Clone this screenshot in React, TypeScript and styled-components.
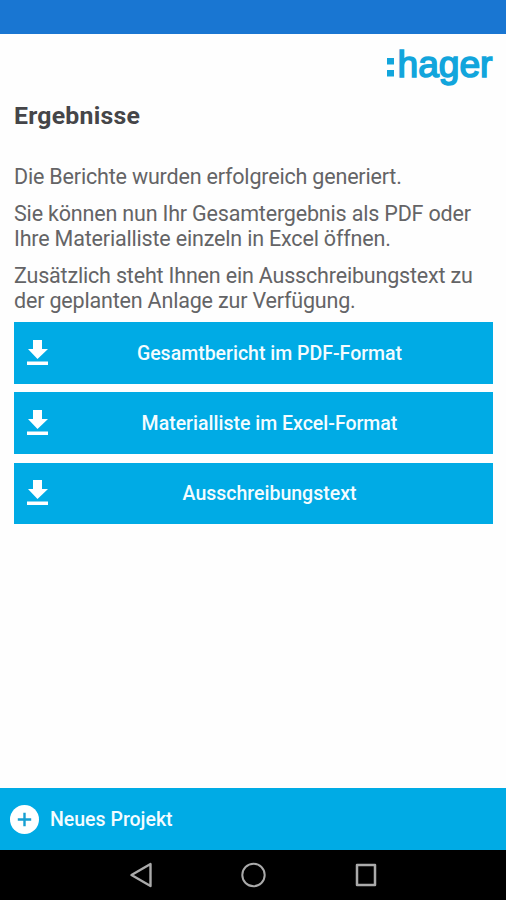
import React from 'react';
import styled, { createGlobalStyle } from 'styled-components';

const GlobalStyle = createGlobalStyle`
  * { box-sizing: border-box; }
  body { margin: 0; background: #fff; }
`;

const Screen = styled.div`
  display: flex;
  flex-direction: column;
  width: 506px;
  height: 900px;
  overflow: hidden;
  background: #fefefe;
  color: #646466;
  font-family: Roboto, sans-serif;
`;

const StatusBar = styled.div`
  flex: 0 0 34px;
  background: #1976d2;
`;

const Header = styled.header`
  display: flex;
  justify-content: flex-end;
  flex: 0 0 56px;
  padding: 8px 12px 0 0;
`;

const Content = styled.main`
  flex: 1;
  padding: 11px 13px 0 14px;
`;

const Title = styled.h1`
  margin: 0 0 33px;
  font-size: 24.8px;
  line-height: 30px;
  font-weight: 700;
  letter-spacing: 0.25px;
  color: #454548;
`;

const Paragraph = styled.p`
  margin: 0 0 12px;
  font-size: 21.5px;
  line-height: 25px;
  letter-spacing: -0.18px;
  white-space: nowrap;
`;

const Actions = styled.div`
  display: flex;
  flex-direction: column;
  gap: 8.5px;
  margin-top: -3px;
`;

const BaseButton = styled.button`
  display: flex;
  align-items: center;
  border: 0;
  background: #00abe5;
  color: #f4fcff;
  font: 500 19.5px/28px Roboto, sans-serif;
`;

const ReportButton = styled(BaseButton)`
  height: 61.8px;
  padding: 0 48px 0 13px;
`;

const ReportLabel = styled.span`
  flex: 1;
  padding: 2px 0 0 45px;
  text-align: center;
  white-space: nowrap;
`;

const ProjectLabel = styled.span`
  padding-top: 2px;
`;

const NewProject = styled(BaseButton)`
  flex: 0 0 62px;
  gap: 11px;
  padding: 0 10px;
`;

const NavigationBar = styled.nav`
  display: flex;
  flex: 0 0 50px;
  justify-content: center;
  align-items: center;
  gap: 87.5px;
  background: #000;
`;

const Icon = styled.svg`
  display: block;
  flex: none;
`;

const HagerLogo = () => (
  <Icon width="108" height="46" viewBox="0 0 108 46" fill="#12a5dc" aria-label="hager">
    <rect x="1" y="16" width="7" height="6.5" />
    <rect x="1" y="28" width="7" height="6.5" />
    <text x="11.5" y="34.7" fontFamily="Liberation Sans, sans-serif" fontSize="37.5" stroke="#12a5dc" strokeWidth="1.6" textLength="95" lengthAdjust="spacingAndGlyphs">hager</text>
  </Icon>
);

const DownloadIcon = () => (
  <Icon width="22" height="26" viewBox="0 0 22 26" fill="#fff">
    <path d="M6 0h9v9h6L10.5 19 1 9h5zM0 21.5h21V25H0z" />
  </Icon>
);

const reports = ['Gesamtbericht im PDF-Format', 'Materialliste im Excel-Format', 'Ausschreibungstext'];

export default function App() {
  return (
    <Screen>
      <GlobalStyle />
      <StatusBar />
      <Header><HagerLogo /></Header>
      <Content>
        <Title>Ergebnisse</Title>
        <Paragraph>Die Berichte wurden erfolgreich generiert.</Paragraph>
        <Paragraph>Sie können nun Ihr Gesamtergebnis als PDF oder<br />Ihre Materialliste einzeln in Excel öffnen.</Paragraph>
        <Paragraph>Zusätzlich steht Ihnen ein Ausschreibungstext zu<br />der geplanten Anlage zur Verfügung.</Paragraph>
        <Actions>
          {reports.map((label) => (
            <ReportButton key={label}>
              <DownloadIcon />
              <ReportLabel>{label}</ReportLabel>
            </ReportButton>
          ))}
        </Actions>
      </Content>
      <NewProject>
        <Icon width="29" height="29" viewBox="0 0 29 29">
          <circle cx="14.5" cy="14.5" r="14.5" fill="#fff" />
          <path d="M14.5 7.8v13.4M7.8 14.5h13.4" stroke="#169fd2" strokeWidth="2.4" />
        </Icon>
        <ProjectLabel>Neues Projekt</ProjectLabel>
      </NewProject>
      <NavigationBar>
        <Icon width="24" height="26" viewBox="0 0 24 26" fill="none" stroke="#aaa" strokeWidth="2.4" strokeLinejoin="round">
          <path d="M21.5 2v22L2.5 13z" />
        </Icon>
        <Icon width="26" height="26" viewBox="0 0 26 26" fill="none" stroke="#aaa" strokeWidth="2">
          <circle cx="13.5" cy="13" r="11.2" />
        </Icon>
        <Icon width="24" height="26" viewBox="0 0 24 26" fill="none" stroke="#aaa" strokeWidth="2.5" strokeLinejoin="round">
          <path d="M3 3h18v20H3z" />
        </Icon>
      </NavigationBar>
    </Screen>
  );
}
